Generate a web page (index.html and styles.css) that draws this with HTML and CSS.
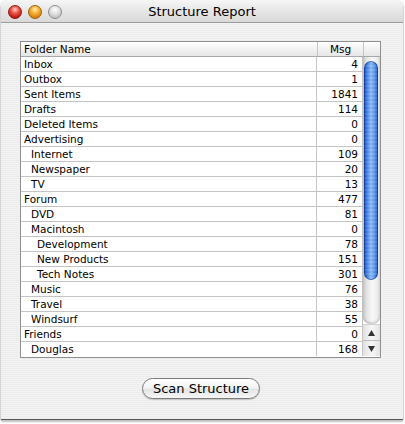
FILE: index.html
```html
<!DOCTYPE html>
<html>
<head>
<meta charset="utf-8">
<link rel="stylesheet" href="styles.css">
</head>
<body>
<div class="window">
  <div class="titlebar">
    <div class="lights">
      <span class="light red"></span>
      <span class="light orange"></span>
      <span class="light gray"></span>
    </div>
    <div class="title">Structure Report</div>
  </div>
  <div class="content">
    <div class="table">
      <div class="grid">
        <div class="head">
          <div class="hname">Folder Name</div>
          <div class="hmsg">Msg</div>
          <div class="hcorner"></div>
        </div>
        <div class="body">
          <div class="rows">
            <div class="row"><div class="name l0">Inbox</div><div class="msg">4</div></div>
            <div class="row"><div class="name l0">Outbox</div><div class="msg">1</div></div>
            <div class="row"><div class="name l0">Sent Items</div><div class="msg">1841</div></div>
            <div class="row"><div class="name l0">Drafts</div><div class="msg">114</div></div>
            <div class="row"><div class="name l0">Deleted Items</div><div class="msg">0</div></div>
            <div class="row"><div class="name l0">Advertising</div><div class="msg">0</div></div>
            <div class="row"><div class="name l1">Internet</div><div class="msg">109</div></div>
            <div class="row"><div class="name l1">Newspaper</div><div class="msg">20</div></div>
            <div class="row"><div class="name l1">TV</div><div class="msg">13</div></div>
            <div class="row"><div class="name l0">Forum</div><div class="msg">477</div></div>
            <div class="row"><div class="name l1">DVD</div><div class="msg">81</div></div>
            <div class="row"><div class="name l1">Macintosh</div><div class="msg">0</div></div>
            <div class="row"><div class="name l2">Development</div><div class="msg">78</div></div>
            <div class="row"><div class="name l2">New Products</div><div class="msg">151</div></div>
            <div class="row"><div class="name l2">Tech Notes</div><div class="msg">301</div></div>
            <div class="row"><div class="name l1">Music</div><div class="msg">76</div></div>
            <div class="row"><div class="name l1">Travel</div><div class="msg">38</div></div>
            <div class="row"><div class="name l1">Windsurf</div><div class="msg">55</div></div>
            <div class="row"><div class="name l0">Friends</div><div class="msg">0</div></div>
            <div class="row"><div class="name l1">Douglas</div><div class="msg">168</div></div>
          </div>
          <div class="scrollbar">
            <div class="track">
              <div class="thumb"></div>
            </div>
            <div class="arrow up">
              <svg width="7" height="6" viewBox="0 0 7 6"><polygon points="3.5,0 7,6 0,6" fill="#333"/></svg>
            </div>
            <div class="arrow down">
              <svg width="7" height="6" viewBox="0 0 7 6"><polygon points="0,0 7,0 3.5,6" fill="#333"/></svg>
            </div>
          </div>
        </div>
      </div>
    </div>
    <div class="actions">
      <button class="btn">Scan Structure</button>
    </div>
  </div>
</div>
</body>
</html>
```
FILE: styles.css
```css
html, body {
  margin: 0;
  padding: 0;
  background: #ffffff;
}
body {
  font-family: "DejaVu Sans", "Liberation Sans", sans-serif;
  width: 405px;
  height: 424px;
  overflow: hidden;
}
.window {
  margin: 0 2px 0 1px;
  height: 419px;
  border-radius: 7px 7px 0 0;
  background: repeating-linear-gradient(to bottom, #ececec 0, #ececec 1px, #f3f3f3 1px, #f3f3f3 2px);
  border-bottom: 1px solid #5a5a5a;
  box-shadow: 0 2px 2px rgba(0,0,0,0.25), 1px 0 1px rgba(0,0,0,0.12), -1px 0 1px rgba(0,0,0,0.12);
  display: flex;
  flex-direction: column;
}
.titlebar {
  height: 22px;
  position: relative;
  border-radius: 7px 7px 0 0;
  background: linear-gradient(to bottom, #f6f6f6 0%, #e6e6e6 50%, #d9d9d9 100%);
  border-bottom: 1px solid #9c9c9c;
  display: flex;
  align-items: center;
  justify-content: center;
}
.lights {
  position: absolute;
  left: 7px;
  top: 5px;
  display: flex;
  gap: 6px;
}
.light {
  width: 14px;
  height: 14px;
  border-radius: 50%;
  box-sizing: border-box;
  display: block;
}
.light.red {
  background: radial-gradient(circle at 50% 30%, #ffd0c8 0%, #f05a4a 35%, #b8100a 80%, #8a0a05 100%);
  border: 1px solid #8d1a12;
}
.light.orange {
  background: radial-gradient(circle at 50% 30%, #fff1b8 0%, #f7b53a 35%, #d77a08 80%, #a05a05 100%);
  border: 1px solid #9a6010;
}
.light.gray {
  background: radial-gradient(circle at 50% 30%, #ffffff 0%, #e2e2e2 40%, #bcbcbc 85%, #a8a8a8 100%);
  border: 1px solid #8e8e8e;
}
.title {
  font-size: 13px;
  color: #000;
  padding-top: 1px;
}
.content {
  flex: 1;
  padding: 18px 22px 0 19px;
  display: flex;
  flex-direction: column;
}
.table {
  border: 1px solid #8f8f8f;
  background: #fff;
  width: 359px;
  height: 315px;
  font-size: 10.5px;
  color: #000;
}
.head {
  display: flex;
  height: 14px;
  border-bottom: 1px solid #a8a8a8;
  background: linear-gradient(to bottom, #ffffff 0%, #f2f2f2 50%, #e6e6e6 100%);
  line-height: 14px;
}
.hname {
  width: 293px;
  padding-left: 3px;
  border-right: 1px solid #c4c4c4;
}
.hmsg {
  width: 45px;
  border-right: 1px solid #c4c4c4;
  text-align: center;
}
.hcorner {
  flex: 1;
}
.body {
  display: flex;
}
.rows {
  width: 342px;
}
.row {
  display: flex;
  height: 14px;
  line-height: 14px;
  border-bottom: 1px solid #c4c4c4;
}
.row:last-child {
  border-bottom: none;
}
.name {
  width: 296px;
  box-sizing: border-box;
  border-right: 1px solid #c4c4c4;
  white-space: nowrap;
}
.l0 { padding-left: 3px; }
.l1 { padding-left: 10px; }
.l2 { padding-left: 16px; }
.msg {
  flex: 1;
  text-align: right;
  padding-right: 4px;
  border-right: 1px solid #c4c4c4;
}
.scrollbar {
  width: 17px;
  display: flex;
  flex-direction: column;
  height: 299px;
}
.track {
  flex: 1;
  position: relative;
  background: linear-gradient(to right, #c9c9c9 0%, #e6e6e6 25%, #f8f8f8 55%, #efefef 80%, #dcdcdc 100%);
  border-bottom-left-radius: 7px;
  border-bottom-right-radius: 7px;
  box-shadow: inset 0 -2px 2px rgba(0,0,0,0.15);
}
.thumb {
  position: absolute;
  left: 1px;
  right: 2px;
  top: 4px;
  height: 219px;
  border-radius: 7px;
  background:
    repeating-linear-gradient(to bottom, rgba(255,255,255,0.08) 0, rgba(255,255,255,0.08) 2px, rgba(0,0,0,0.03) 2px, rgba(0,0,0,0.03) 4px),
    linear-gradient(to right, #1d4fbe 0%, #3f7ee3 20%, #8ebdf6 50%, #5d98ea 75%, #1f56c4 100%);
  box-shadow: inset 0 0 0 1px rgba(10,40,120,0.55);
}
.arrow {
  height: 15px;
  display: flex;
  align-items: center;
  justify-content: center;
  background: linear-gradient(to right, #e0e0e0 0%, #f7f7f7 50%, #e4e4e4 100%);
}
.arrow.up {
  border-top: 1px solid #cfcfcf;
  height: 15px;
}
.arrow.down {
  border-top: 1px solid #bdbdbd;
  height: 15px;
}
.actions {
  display: flex;
  justify-content: center;
  padding-top: 20px;
  padding-left: 1px;
}
.btn {
  font-family: "DejaVu Sans", "Liberation Sans", sans-serif;
  font-size: 13px;
  color: #000;
  height: 21px;
  width: 118px;
  padding: 0;
  border-radius: 11px;
  border: 1px solid #7a7a7a;
  background: linear-gradient(to bottom, #ffffff 0%, #f4f4f4 45%, #e4e4e4 55%, #f6f6f6 100%);
  box-shadow: 0 1px 1px rgba(0,0,0,0.2);
  line-height: 19px;
}
```
